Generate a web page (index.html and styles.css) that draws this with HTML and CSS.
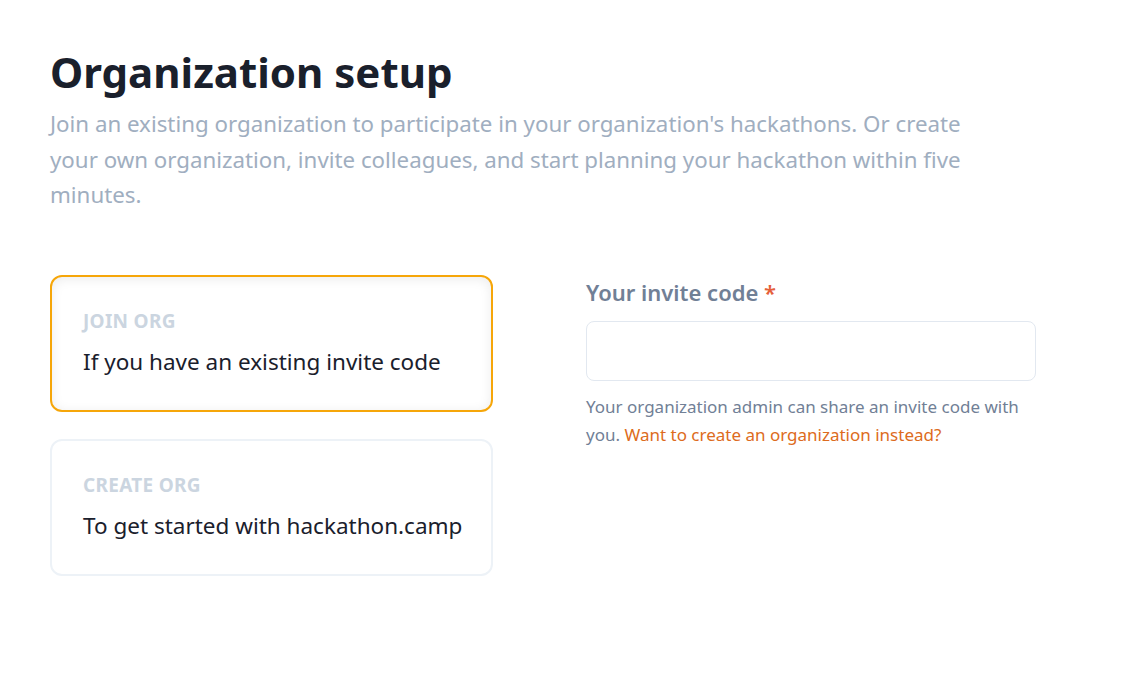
FILE: index.html
```html
<!DOCTYPE html>
<html lang="en">
<head>
    <meta charset="UTF-8">
    <meta name="viewport" content="width=device-width, initial-scale=1.0">
    <title>Organization setup</title>
    <link rel="stylesheet" href="styles.css">
</head>
<body>
    <div class="page">
        <h1>Organization setup</h1>
        <p class="intro">Join an existing organization to participate in your organization's hackathons. Or create your own organization, invite colleagues, and start planning your hackathon within five minutes.</p>

        <div class="setup">
            <div class="options">
                <div class="option ativo">
                    <div class="option-label">Join org</div>
                    <div class="option-text">If you have an existing invite code</div>
                </div>
                <div class="option">
                    <div class="option-label">Create org</div>
                    <div class="option-text">To get started with hackathon.camp</div>
                </div>
            </div>

            <div class="form">
                <label for="codigo">Your invite code <span class="obrigatorio">*</span></label>
                <input type="text" id="codigo">
                <p class="ajuda">Your organization admin can share an invite code with you. <a href="#">Want to create an organization instead?</a></p>
            </div>
        </div>
    </div>
</body>
</html>
```

FILE: styles.css
```css
body {
    font-family: "Noto Sans", "Open Sans", sans-serif;
    margin: 0;
    background: #fff;
    color: #1a202c;
}
.page {
    padding: 44px 50px 0 50px;
}
h1 {
    font-size: 42px;
    font-weight: 700;
    line-height: 56px;
    margin: 0;
    color: #1a202c;
}
.intro {
    font-size: 22.3px;
    line-height: 35.5px;
    color: #a0aec0;
    max-width: 935px;
    margin: 6px 0 0 0;
}
.setup {
    display: flex;
    gap: 93px;
    margin-top: 62px;
}
.options {
    width: 443px;
    display: flex;
    flex-direction: column;
    gap: 27px;
}
.option {
    border: 2px solid #edf2f7;
    border-radius: 12px;
    padding: 32px 16px 30px 31px;
    height: 137px;
    box-sizing: border-box;
}
.option.ativo {
    border-color: #f6a609;
    box-shadow: inset 0 2px 12px rgba(0, 0, 0, 0.08);
}
.option-label {
    font-size: 19px;
    font-weight: 700;
    text-transform: uppercase;
    color: #cbd5e0;
    line-height: 24px;
    letter-spacing: 0.3px;
}
.option-text {
    font-size: 22.5px;
    line-height: 30px;
    margin-top: 14px;
    white-space: nowrap;
}
.form {
    width: 450px;
    padding-top: 2px;
}
label {
    display: block;
    font-size: 22px;
    font-weight: 600;
    color: #718096;
    line-height: 30px;
}
.obrigatorio {
    color: #e5603a;
}
input[type="text"] {
    display: block;
    width: 100%;
    box-sizing: border-box;
    height: 60px;
    margin-top: 14px;
    border: 1px solid #e2e8f0;
    border-radius: 8px;
    font-size: 18px;
    padding: 0 16px;
}
.ajuda {
    font-size: 17px;
    line-height: 28px;
    color: #718096;
    margin: 12px 0 0 0;
}
.ajuda a {
    color: #dd6b20;
    text-decoration: none;
}
```
